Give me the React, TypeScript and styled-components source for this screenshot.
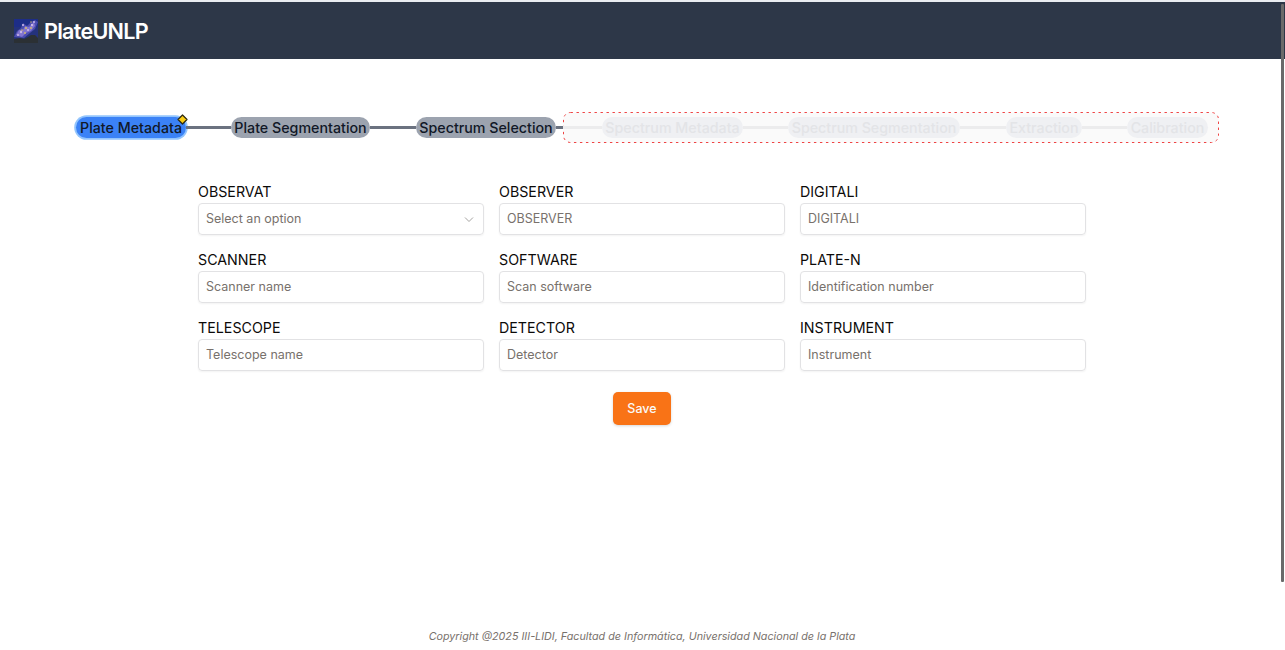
import React from "react";
import styled, { createGlobalStyle } from "styled-components";

const GlobalStyle = createGlobalStyle`
  * { box-sizing: border-box; }
  html, body { margin: 0; height: 100%; overflow: hidden; background: #fff; }
  body { font-family: Inter, "Liberation Sans", sans-serif; font-size: 14.28px; color: #0c0a09; }
`;

const Page = styled.div`
  position: relative;
  height: 650px;
  display: flex;
  flex-direction: column;
  border-top: 2px solid #e9ecf1;
`;

const Header = styled.header`
  height: 57px;
  padding: 0 13px;
  display: flex;
  align-items: center;
  gap: 5px;
  background: #2d3748;
`;

const Brand = styled.h1`
  margin: 0;
  color: #fff;
  font-size: 21.6px;
  line-height: 28px;
  font-weight: 600;
  letter-spacing: -0.74px;
`;

const Stepper = styled.nav`
  display: flex;
  align-items: center;
  height: 31px;
  margin: 53px 0 0 76px;
`;

const Step = styled.div<{ $width: number; $active?: boolean; $locked?: boolean }>`
  position: relative;
  width: ${(p) => p.$width}px;
  height: 21px;
  flex: none;
  display: flex;
  align-items: center;
  justify-content: center;
  border-radius: 11px;
  background: ${(p) => (p.$active ? "#3b82f6" : p.$locked ? "#eff0f3" : "#9ca3af")};
  box-shadow: ${(p) => (p.$active ? "0 0 0 1.8px #93c5fd" : "none")};
  color: ${(p) => (p.$locked ? "#e3e4e7" : "#111827")};
  font-size: 14.25px;
  line-height: 21px;
  font-weight: 500;
  white-space: nowrap;
`;

const Connector = styled.div<{ $width: number; $locked?: boolean }>`
  position: relative;
  width: ${(p) => p.$width}px;
  height: 3px;
  flex: none;
  background: ${(p) => (p.$locked ? "#ececed" : "#6b7280")};
`;

const Marker = styled.svg`
  position: absolute;
  top: -3px;
  right: -2px;
`;

const LockedSteps = styled.div`
  position: relative;
  display: flex;
  align-items: center;
  height: 31px;
  padding-right: 11px;
`;

const LockedFrame = styled.svg`
  position: absolute;
  inset: 0;
`;

const Form = styled.form`
  width: 888px;
  margin: 38px 0 0 198px;
  display: flex;
  flex-direction: column;
  align-items: center;
`;

const Fields = styled.div`
  width: 100%;
  display: grid;
  grid-template-columns: repeat(3, 286px);
  column-gap: 15px;
  row-gap: 14px;
`;

const Field = styled.label`
  display: flex;
  flex-direction: column;
  height: 54px;
  font-size: 14.25px;
  line-height: 22px;
`;

const Control = styled.span`
  height: 32px;
  flex: none;
  display: flex;
  align-items: center;
  justify-content: space-between;
  padding: 0 8px 0 7px;
  border: 1px solid #e2e2e4;
  border-radius: 4px;
  box-shadow: 0 1px 2px rgba(0, 0, 0, 0.05);
  color: #78716c;
  font-size: 12.5px;
  line-height: 18px;
`;

const Input = styled.input`
  width: 100%;
  height: 18px;
  padding: 0;
  border: 0;
  outline: 0;
  background: transparent;
  font: inherit;
  color: inherit;
  &::placeholder { color: #78716c; opacity: 1; }
`;

const SaveButton = styled.button`
  width: 58px;
  height: 33px;
  margin-top: 21px;
  padding: 0;
  border: 0;
  border-radius: 5px;
  background: #f97316;
  color: #fafaf9;
  box-shadow: 0 1px 3px rgba(0, 0, 0, 0.16);
  font-family: inherit;
  font-size: 12.5px;
  font-weight: 500;
`;

const Footer = styled.footer`
  margin: auto 0 4px;
  padding-right: 1px;
  text-align: center;
  font-size: 10.75px;
  line-height: 18px;
  font-style: italic;
  color: #78716c;
`;

const ScrollThumb = styled.div`
  position: absolute;
  top: 2px;
  right: 1px;
  width: 3px;
  height: 578px;
  border-radius: 1px;
  background: #6a6a6a;
`;

const Logo = () => (
  <svg width="26" height="24" viewBox="0 0 26 24">
    <rect x="1" width="24" height="24" fill="#24327c" />
    <rect x="1" width="24" height="8" fill="#1d2d87" />
    <path d="M1 18 4 12 8 9 10 4 14 7 18 3 22 1 25 3 22 10 17 14 11 19Z" fill="#4c4daf" />
    <path d="M3 16 6 11 10 11 12 7 16 8 21 3 22 7 18 12 13 14 9 18Z" fill="#8174cf" />
    <g fill="#c8b6e6">
      <circle cx="10" cy="6" r="1.1" /><circle cx="8" cy="13" r="1.2" />
      <circle cx="15" cy="11" r="1.1" /><circle cx="19" cy="6" r="1.2" />
      <circle cx="5" cy="16" r="1" /><circle cx="21" cy="3" r="1" />
    </g>
    <g fill="#d7be68">
      <circle cx="13" cy="9" r="1" /><circle cx="18" cy="9" r=".9" />
      <circle cx="9" cy="11" r=".8" /><circle cx="18" cy="3" r=".7" />
      <circle cx="12" cy="14" r=".9" />
    </g>
    <path d="M1 20 7 19 11 20 15 18 18 16 22 16 25 19V24H1Z" fill="#2b3034" />
  </svg>
);

const Chevron = () => (
  <svg width="12" height="12" viewBox="0 0 12 12" fill="none" stroke="#a5a3a1" strokeWidth="1">
    <path d="M2 4.5 6 8.5 10 4.5" />
  </svg>
);

const fields = [
  ["OBSERVAT", "Select an option"], ["OBSERVER", "OBSERVER"], ["DIGITALI", "DIGITALI"],
  ["SCANNER", "Scanner name"], ["SOFTWARE", "Scan software"], ["PLATE-N", "Identification number"],
  ["TELESCOPE", "Telescope name"], ["DETECTOR", "Detector"], ["INSTRUMENT", "Instrument"],
];

export default function App() {
  return (
    <Page>
      <GlobalStyle />
      <Header><Logo /><Brand>PlateUNLP</Brand></Header>
      <Stepper>
        <Step $width={110} $active>
          Plate Metadata
          <Marker width="11" height="11" viewBox="0 0 11 11">
            <path d="M5.5 1 10 5.5 5.5 10 1 5.5Z" fill="#facc15" stroke="#2b2810" strokeWidth="1.2" strokeLinejoin="round" />
          </Marker>
        </Step>
        <Connector $width={45} />
        <Step $width={139}>Plate Segmentation</Step>
        <Connector $width={46} />
        <Step $width={140}>Spectrum Selection</Step>
        <Connector $width={7} />
        <LockedSteps>
          <LockedFrame width="656" height="31" viewBox="0 0 656 31">
            <rect x=".5" y=".5" width="655" height="30" rx="7" fill="#fafafa" stroke="#ef4444" strokeDasharray="2.4 3.6" />
          </LockedFrame>
          <Connector $width={39} $locked />
          <Step $width={141} $locked>Spectrum Metadata</Step>
          <Connector $width={45} $locked />
          <Step $width={172} $locked>Spectrum Segmentation</Step>
          <Connector $width={46} $locked />
          <Step $width={76} $locked>Extraction</Step>
          <Connector $width={45} $locked />
          <Step $width={81} $locked>Calibration</Step>
        </LockedSteps>
      </Stepper>
      <Form>
        <Fields>
          {fields.map(([name, hint], i) => (
            <Field key={name}>
              {name}
              <Control>
                {i === 0 ? <><span>{hint}</span><Chevron /></> : <Input placeholder={hint} />}
              </Control>
            </Field>
          ))}
        </Fields>
        <SaveButton type="button">Save</SaveButton>
      </Form>
      <Footer>Copyright @2025 III-LIDI, Facultad de Informática, Universidad Nacional de la Plata</Footer>
      <ScrollThumb />
    </Page>
  );
}
